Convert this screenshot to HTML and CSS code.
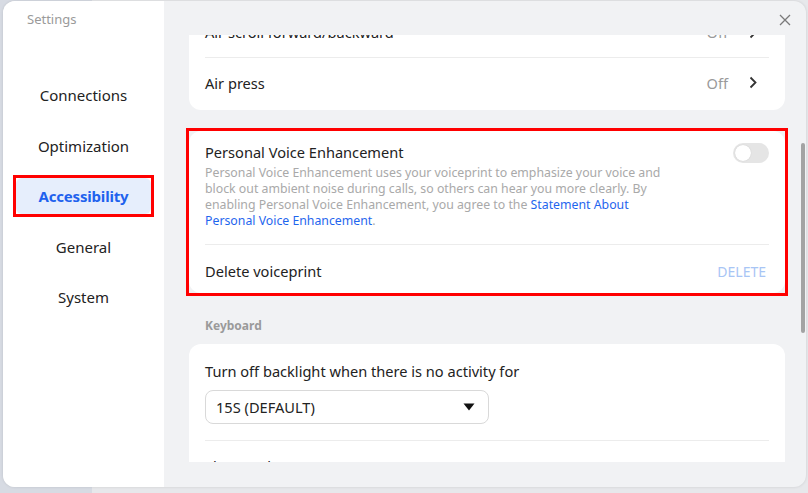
FILE: index.html
```html
<!DOCTYPE html>
<html lang="en">
<head>
<meta charset="utf-8">
<title>Settings</title>
<link rel="stylesheet" href="styles.css">
</head>
<body>
<div class="window">
  <aside class="sidebar">
    <div class="app-title">Settings</div>
    <nav class="nav">
      <div class="nav-item">Connections</div>
      <div class="nav-item">Optimization</div>
      <div class="nav-item active-wrap"><span class="nav-active">Accessibility</span></div>
      <div class="nav-item">General</div>
      <div class="nav-item">System</div>
    </nav>
  </aside>
  <main class="main">
    <header class="topbar">
      <svg class="close" width="12" height="12" viewBox="0 0 12 12"><path d="M1 1L11 11M11 1L1 11" stroke="#7a7a7a" stroke-width="1.3" fill="none"/></svg>
    </header>
    <div class="scroll">
      <div class="scroll-inner">
        <section class="card card-first">
          <div class="row">
            <span class="row-label">Air scroll forward/backward</span>
            <span class="row-value">Off</span>
            <svg class="chev" width="8" height="13" viewBox="0 0 8 13"><path d="M1.5 1.5L6.5 6.5L1.5 11.5" stroke="#333" stroke-width="1.8" fill="none"/></svg>
          </div>
          <div class="row">
            <span class="row-label">Air press</span>
            <span class="row-value">Off</span>
            <svg class="chev" width="8" height="13" viewBox="0 0 8 13"><path d="M1.5 1.5L6.5 6.5L1.5 11.5" stroke="#333" stroke-width="1.8" fill="none"/></svg>
          </div>
        </section>

        <div class="annot">
          <section class="card">
            <div class="pve">
              <div class="pve-text">
                <div class="pve-title">Personal Voice Enhancement</div>
                <p class="pve-desc">Personal Voice Enhancement uses your voiceprint to emphasize your voice and<br>block out ambient noise during calls, so others can hear you more clearly. By<br>enabling Personal Voice Enhancement, you agree to the <span class="link">Statement About</span><br><span class="link">Personal Voice Enhancement</span>.</p>
              </div>
              <span class="toggle"><span class="knob"></span></span>
            </div>
            <div class="row row-del">
              <span class="row-label">Delete voiceprint</span>
              <span class="action">DELETE</span>
            </div>
          </section>
        </div>

        <div class="section-label">Keyboard</div>
        <section class="card">
          <div class="kb">
            <div class="kb-title">Turn off backlight when there is no activity for</div>
            <div class="select">
              <span>15S (DEFAULT)</span>
              <svg width="12" height="8" viewBox="0 0 12 8"><path d="M0.5 0.5H11.5L6 7.5Z" fill="#111"/></svg>
            </div>
          </div>
          <div class="row row-short">
            <span class="row-label">Shortcut keys</span>
            <span class="action">RESTORE DEFAULT</span>
          </div>
        </section>
      </div>
      <div class="scrollbar"></div>
    </div>
  </main>
</div>
</body>
</html>
```

FILE: styles.css
```css
* { box-sizing: border-box; }
html, body { margin: 0; padding: 0; }
body {
  width: 808px;
  height: 493px;
  overflow: hidden;
  background: linear-gradient(to right, #d7dbe3 92px, #e7e8eb 92px);
  font-family: "Noto Sans", "Open Sans", sans-serif;
  color: #222;
}
.window {
  margin: 1px 0 0 3px;
  width: 803px;
  height: 486px;
  border-radius: 12px;
  overflow: hidden;
  display: flex;
  background: #f1f2f4;
  box-shadow: 0 0 3px rgba(0,0,0,0.12);
}
.sidebar {
  width: 161px;
  background: #fff;
  flex: none;
  display: flex;
  flex-direction: column;
}
.app-title {
  font-size: 13px;
  color: #9a9a9a;
  padding: 9px 0 0 24px;
  height: 76px;
  line-height: 18px;
}
.nav {
  display: flex;
  flex-direction: column;
  gap: 14.6px;
  padding: 0 13px;
}
.nav-item {
  height: 36px;
  display: flex;
  align-items: center;
  justify-content: center;
  font-size: 15px;
  color: #222;
}
.active-wrap {
  outline: 3px solid #ff0000;
  outline-offset: 0;
  padding: 0;
}
.nav-active {
  width: 100%;
  height: 100%;
  display: flex;
  align-items: center;
  justify-content: center;
  background: #e6eefc;
  border-radius: 6px;
  color: #1e62ee;
  font-weight: 700;
  letter-spacing: -0.2px;
}
.main {
  flex: 1;
  display: flex;
  flex-direction: column;
  min-width: 0;
}
.topbar {
  height: 34px;
  flex: none;
  display: flex;
  justify-content: flex-end;
  align-items: flex-start;
  padding: 13px 15px 0 0;
}
.scroll {
  height: 427px;
  overflow: hidden;
  position: relative;
  padding: 0 21px 0 25px;
}
.scroll-inner {
  margin-top: -32px;
}
.scrollbar {
  position: absolute;
  right: 1px;
  top: 108px;
  width: 4px;
  height: 190px;
  border-radius: 2px;
  background: #a3a3a3;
}
.card {
  background: #fff;
  border-radius: 12px;
  padding: 0 16px;
}
.card-first {
  padding-top: 4px;
  padding-bottom: 3px;
  margin-bottom: 21px;
}
.row {
  height: 50px;
  display: flex;
  align-items: center;
  font-size: 14.6px;
  color: #222;
}
.row + .row { border-top: 1px solid #ececec; }
.row-label { flex: 1; }
.row-value {
  color: #9a9a9a;
  margin-right: 21px;
}
.chev { margin-right: 12px; }
.annot {
  outline: 3px solid #ff0000;
}
.pve {
  display: flex;
  align-items: flex-start;
  padding: 11px 0 15px;
  border-bottom: 1px solid #ececec;
}
.pve-text { flex: 1; }
.pve-title {
  font-size: 14.6px;
  line-height: 20px;
  color: #222;
}
.pve-desc {
  margin: 3px 0 0;
  font-size: 12.3px;
  line-height: 16px;
  color: #a9a9a9;
  white-space: nowrap;
}
.link { color: #1f66ee; }
.toggle {
  margin-top: 1px;
  width: 36px;
  height: 20px;
  border-radius: 10px;
  background: #e5e5e5;
  padding: 2px;
  display: flex;
  flex: none;
}
.knob {
  width: 16px;
  height: 16px;
  border-radius: 50%;
  background: #fff;
  box-shadow: 0 0 1px rgba(0,0,0,0.2);
}
.row-del { height: 48px; padding-top: 4px; }
.action {
  font-size: 14px;
  color: #a8c5f5;
  margin-right: 3px;
}
.section-label {
  font-size: 12px;
  font-weight: 700;
  color: #9a9a9a;
  line-height: 16px;
  margin: 25px 0 10px 16px;
}
.kb {
  padding: 17px 0 16px;
  border-bottom: 1px solid #ececec;
}
.kb-title {
  font-size: 14.6px;
  line-height: 20px;
}
.select {
  margin-top: 9px;
  width: 284px;
  height: 34px;
  border: 1px solid #d9d9d9;
  border-radius: 8px;
  display: flex;
  align-items: center;
  justify-content: space-between;
  padding: 0 13px 0 10px;
  font-size: 14.6px;
}
.row-short { height: 50px; }
```
